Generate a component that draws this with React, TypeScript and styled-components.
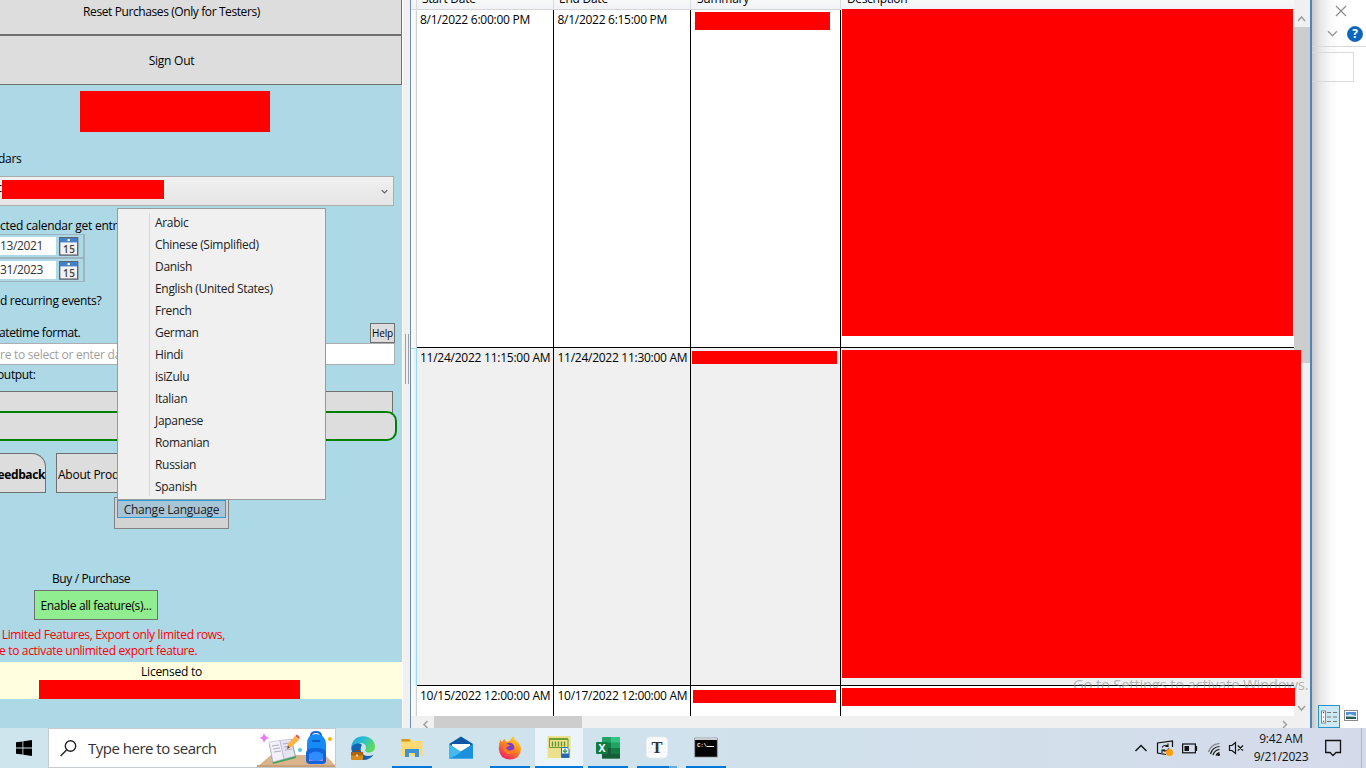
import React from 'react';
import styled, { createGlobalStyle } from 'styled-components';

const Global = createGlobalStyle`
  html, body { margin: 0; padding: 0; overflow: hidden; }
  body { font-family: "Open Sans", "Noto Sans", sans-serif; font-size: 12px; color: #000; }
  * { box-sizing: border-box; }
`;

const Screen = styled.div`
  width: 1366px;
  height: 768px;
  display: flex;
  flex-direction: column;
  overflow: hidden;
  background: #fff;
`;
const Desktop = styled.div`
  display: flex;
  height: 728px;
  position: relative;
  overflow: hidden;
`;

const Text = styled.span<{ $ls?: number }>`
  letter-spacing: ${p => p.$ls ?? -0.25}px;
  white-space: pre;
`;

/* ---------- left pane ---------- */
const Pane = styled.div`
  width: 402px;
  flex: none;
  background: #add8e6;
  display: flex;
  flex-direction: column;
  align-items: flex-start;
  position: relative;
`;
const WideButton = styled.div<{ $h: number; $up?: number }>`
  width: 402px;
  height: ${p => p.$h}px;
  margin-top: -${p => p.$up ?? 0}px;
  flex: none;
  background: #ddd;
  border: 1px solid #707070;
  border-left: 0;
  display: flex;
  align-items: center;
  justify-content: center;
  padding-right: 58px;
`;
const Redaction = styled.div<{ $w: number; $h: number; $m?: string }>`
  flex: none;
  width: ${p => p.$w}px;
  height: ${p => p.$h}px;
  margin: ${p => p.$m ?? '0'};
  background: #f00;
  position: relative;
  z-index: 2;
`;
const Label = styled.div<{ $top?: number; $h?: number; $x?: number }>`
  flex: none;
  height: ${p => p.$h ?? 18}px;
  line-height: ${p => (p.$h ?? 18) + 1}px;
  margin-top: ${p => p.$top ?? 0}px;
  margin-left: ${p => p.$x ?? 0}px;
  white-space: pre;
`;
const Combo = styled.div`
  flex: none;
  width: 394px;
  height: 30px;
  margin-top: 9px;
  border: 1px solid #acacac;
  border-left: 0;
  background: linear-gradient(#f0f0f0, #e5e5e5);
  display: flex;
  align-items: center;
  justify-content: space-between;
  padding-right: 5px;
`;
const ComboValue = styled.div`
  display: flex;
  height: 28px;
  line-height: 22px;
`;
const Clip = styled.div`
  width: 2px;
  overflow: hidden;
  display: flex;
  justify-content: flex-end;
`;
const Picker = styled.div`
  flex: none;
  width: 85px;
  height: 24px;
  border: 1px solid #9db4c0;
  border-right-width: 2px;
  border-left: 0;
  display: flex;
  align-items: center;
`;
const PickerField = styled.div`
  width: 56px;
  height: 18px;
  line-height: 17px;
  background: #fff;
  color: #333;
  margin-right: 3px;
`;
const FormatRow = styled.div`
  flex: none;
  width: 395px;
  height: 20px;
  margin-top: 14px;
  display: flex;
  justify-content: space-between;
`;
const HelpButton = styled.div`
  width: 25px;
  height: 20px;
  background: #ddd;
  border: 1px solid #707070;
  font-size: 10px;
  display: flex;
  align-items: center;
  justify-content: center;
`;
const FormatInput = styled.div`
  flex: none;
  width: 395px;
  height: 22px;
  line-height: 22px;
  border: 1px solid #abadb3;
  border-left: 0;
  background: #fff;
  color: #a0a0a0;
`;
const OutputButton = styled.div`
  flex: none;
  width: 393px;
  height: 22px;
  margin-top: 8px;
  background: #ddd;
  border: 1px solid #707070;
  border-left: 0;
`;
const GreenButton = styled.div`
  flex: none;
  width: 397px;
  height: 30px;
  margin-top: -2px;
  background: #ddd;
  border: 2px solid #008000;
  border-left: 0;
  border-radius: 0 10px 10px 0;
`;
const ButtonRow = styled.div`
  flex: none;
  display: flex;
  gap: 10px;
  margin-top: 12px;
  height: 40px;
`;
const FeedbackButton = styled.div`
  width: 46px;
  background: #ddd;
  border: 1px solid #707070;
  border-left: 0;
  border-radius: 0 14px 0 0;
  line-height: 41px;
  font-weight: 700;
  display: flex;
  justify-content: flex-end;
`;
const AboutButton = styled.div`
  width: 100px;
  background: #ddd;
  border: 1px solid #707070;
  line-height: 41px;
  padding-left: 1px;
`;
const LanguageBox = styled.div`
  flex: none;
  width: 115px;
  height: 32px;
  margin: 4px 0 0 114px;
  padding: 2px;
  background: #d3d3d3;
  border: 1px solid #838383;
`;
const LanguageItem = styled.div`
  width: 109px;
  height: 18px;
  background: #a7c5d6;
  border: 1px solid #26a0da;
  color: #212121;
  line-height: 17px;
  text-align: center;
`;
const EnableButton = styled.div`
  flex: none;
  width: 124px;
  height: 30px;
  margin: 3px 0 6px 34px;
  background: #90ee90;
  border: 1px solid #707070;
  line-height: 29px;
  text-align: center;
`;
const Warning = styled.div`
  flex: none;
  height: 16px;
  line-height: 17px;
  margin-left: -1px;
  color: #f00;
`;
const License = styled.div`
  flex: none;
  width: 402px;
  height: 37px;
  margin-top: 4px;
  background: #ffffe0;
`;
const LicenseTitle = styled.div`
  height: 18px;
  line-height: 19px;
  padding-right: 59px;
  text-align: center;
`;
const Menu = styled.div`
  position: absolute;
  z-index: 5;
  left: 117px;
  top: 208px;
  width: 209px;
  height: 292px;
  padding: 4px 2px 2px 31px;
  background: #f0f0f0;
  border: 1px solid #999;
`;
const MenuList = styled.div`
  border-left: 1px solid #d7d7d7;
  height: 283px;
`;
const MenuItem = styled.div`
  height: 22px;
  line-height: 19px;
  padding-left: 5px;
  color: #212121;
`;

/* ---------- table ---------- */
const Splitter = styled.div`
  width: 8px;
  flex: none;
  background: #f0f0f0;
  border-left: 1px solid #fff;
  display: flex;
  align-items: center;
  justify-content: center;
  gap: 2px;
`;
const Grip = styled.i`
  width: 1px;
  height: 50px;
  margin-top: -10px;
  background: #a0a0a0;
`;
const GridWindow = styled.div`
  width: 902px;
  flex: none;
  border-left: 1px solid #6a8cb0;
  border-right: 1px solid #6b7f94;
  box-shadow: inset -1px 0 #4b84bd;
  display: flex;
  position: relative;
  background: #f0f0f0;
`;
const TableArea = styled.div`
  width: 883px;
  display: flex;
  flex-direction: column;
`;
const Header = styled.div`
  height: 10px;
  flex: none;
  display: flex;
  padding-left: 5px;
  background: linear-gradient(#f7f8fa, #f1f2f5);
  border-bottom: 1px solid #d5d5d5;
`;
const HeaderCell = styled.div<{ $w: number }>`
  width: ${p => p.$w}px;
  height: 9px;
  line-height: 18px;
  padding-left: 5px;
  border-left: 1px solid #d9dbde;
  overflow: hidden;
`;
const HeaderText = styled.div<{ $x?: number }>`
  margin-top: -10px;
  margin-left: ${p => p.$x ?? 0}px;
`;
const Row = styled.div<{ $h: number; $alt?: boolean }>`
  height: ${p => p.$h}px;
  flex: none;
  display: flex;
  background: ${p => (p.$alt ? '#f0f0f0' : '#fff')};
`;
const RowHead = styled.div<{ $alt?: boolean }>`
  width: 6px;
  flex: none;
  background: ${p => (p.$alt ? 'linear-gradient(90deg,#fff,#d9f0fb)' : 'linear-gradient(90deg,#fff,#f2f3f5)')};
  border-right: 1px solid ${p => (p.$alt ? '#99d8f8' : '#d0d0d0')};
  border-top: 1px solid ${p => (p.$alt ? '#99d8f8' : 'transparent')};
`;
const Cell = styled.div<{ $w: number; $open?: boolean; $last?: boolean; $pad?: number }>`
  width: ${p => p.$w}px;
  flex: none;
  line-height: 20px;
  padding-left: ${p => p.$pad ?? 3}px;
  border-right: ${p => (p.$open ? 0 : 1)}px solid #000;
  border-bottom: ${p => (p.$last ? 0 : 1)}px solid #000;
`;
const SummaryCell = styled(Cell)`
  padding-left: 1px;
  display: flex;
`;
const Dot = styled.span`
  width: 3px;
  padding-left: 2px;
  line-height: 20px;
`;
const HScroll = styled.div`
  height: 12px;
  display: flex;
  background: #f0f0f0;
  justify-content: space-between;
  padding: 0 4px 0 10px;
`;
const HThumb = styled.div`
  width: 148px;
  height: 12px;
  margin-left: 5px;
  margin-right: auto;
  background: #cdcdcd;
`;
const VScroll = styled.div`
  width: 16px;
  flex: none;
  display: flex;
  flex-direction: column;
  align-items: center;
`;
const VThumb = styled.div`
  width: 16px;
  height: 336px;
  margin-bottom: auto;
  background: #cdcdcd;
`;
const Watermark = styled.div`
  position: absolute;
  left: 662px;
  top: 674px;
  z-index: 1;
  font-size: 15px;
  line-height: 20px;
  color: rgba(140, 140, 140, 0.62);
`;

/* ---------- window behind ---------- */
const Behind = styled.div`
  flex: 1;
  background: linear-gradient(90deg, #c9c9c9, #e6e6e6 8px, #f8f8f8 18px, #fff 26px);
  display: flex;
  flex-direction: column;
`;
const CloseRow = styled.div`
  height: 21px;
  padding: 4px 0 0 23px;
`;
const HelpRow = styled.div`
  height: 26px;
  padding: 0 3px 0 15px;
  border-bottom: 1px solid #d9d9d9;
  display: flex;
  align-items: center;
  justify-content: space-between;
`;
const AddressBox = styled.div`
  width: 42px;
  height: 30px;
  margin-top: 5px;
  border: 1px solid #d9d9d9;
  border-left: 0;
`;
const ViewModes = styled.div`
  margin-top: auto;
  padding-left: 6px;
  height: 23px;
  display: flex;
`;
const ViewMode = styled.div<{ $on?: boolean }>`
  width: 22px;
  height: 23px;
  display: flex;
  align-items: center;
  justify-content: center;
  padding-bottom: ${p => (p.$on ? 0 : 2)}px;
  background: ${p => (p.$on ? '#cce8f4' : 'transparent')};
  border: 1px solid ${p => (p.$on ? '#2892c9' : 'transparent')};
`;

/* ---------- taskbar ---------- */
const Taskbar = styled.div`
  height: 40px;
  display: flex;
  align-items: stretch;
  background: linear-gradient(90deg, #cfe5ee 0%, #cfe3ed 40%, #d2dfeb 75%, #d5daea 100%);
`;
const Start = styled.div`
  width: 48px;
  display: flex;
  align-items: center;
  justify-content: center;
`;
const Search = styled.div`
  width: 288px;
  margin-right: 3px;
  background: #fff;
  border: 1px solid #c6cbce;
  display: flex;
  align-items: center;
  padding-left: 11px;
  font-size: 15px;
  color: #333;
`;
const SearchText = styled.div`
  margin-left: 11px;
  width: 169px;
`;
const Apps = styled.div`
  display: flex;
  gap: 1px;
`;
const AppTile = styled.div<{ $active?: boolean }>`
  width: 48px;
  height: 40px;
  display: flex;
  flex-direction: column;
  align-items: center;
  justify-content: space-between;
  padding-top: 8px;
  background: ${p => (p.$active ? '#ebf4f8' : 'transparent')};
`;
const Underline = styled.div<{ $w: number; $split?: boolean }>`
  width: ${p => p.$w}px;
  height: 2px;
  background: ${p => (p.$split ? 'linear-gradient(90deg,#0078d7 32px,#63a9e3 32px)' : '#0078d7')};
`;
const Tray = styled.div`
  margin-left: auto;
  display: flex;
  align-items: center;
`;
const Clock = styled.div`
  width: 62px;
  margin-right: 13px;
  text-align: center;
  line-height: 18px;
  padding-bottom: 1px;
  color: #111;
`;
const ShowDesktop = styled.div`
  width: 5px;
  height: 40px;
  border-left: 1px solid #b0b7c4;
`;

const Chevron = ({ dir, size = 8, color = '#606060', w = 1.3 }: { dir: 'up' | 'down' | 'left' | 'right'; size?: number; color?: string; w?: number }) => {
  const d = { up: 'M1 7 5 3 9 7', down: 'M1 3 5 7 9 3', left: 'M7 1 3 5 7 9', right: 'M3 1 7 5 3 9' }[dir];
  return (
    <svg width={size} height={size} viewBox="0 0 10 10" fill="none" stroke={color} strokeWidth={w}>
      <path d={d} />
    </svg>
  );
};

const CalendarIcon = () => (
  <svg width="20" height="19" viewBox="0 0 20 19">
    <rect x=".7" y=".7" width="18" height="17.4" fill="#f2f2f2" stroke="#56606a" strokeWidth="1.3" />
    <rect x="1" y="1" width="17.4" height="4.4" fill="#4481c4" />
    <circle cx="9.7" cy="3" r="1.3" fill="#fff" />
    <text x="4" y="15.6" fontSize="10" fontWeight="600" fill="#444" fontFamily="Open Sans, sans-serif" textLength="12">15</text>
  </svg>
);

const languages = ['Arabic', 'Chinese (Simplified)', 'Danish', 'English (United States)', 'French', 'German', 'Hindi', 'isiZulu', 'Italian', 'Japanese', 'Romanian', 'Russian', 'Spanish'];

const LeftPane = () => (
  <Pane>
    <WideButton $h={47} $up={12 + 0}><Text $ls={-0.4}>Reset Purchases (Only for Testers)</Text></WideButton>
    <WideButton $h={50}><Text>Sign Out</Text></WideButton>
    <Redaction $w={190} $h={41} $m="6px 0 0 80px" />
    <Label $top={17} $x={-2}><Text $ls={-0.3}>dars</Text></Label>
    <Combo>
      <ComboValue>
        <Clip>c</Clip>
        <Redaction $w={162} $h={19} $m="3px 0 0" />
      </ComboValue>
      <Chevron dir="down" size={7} w={1.7} />
    </Combo>
    <Label $top={11} $h={17}><Text>cted calendar get entr</Text></Label>
    <Picker><PickerField><Text $ls={-0.35}>13/2021</Text></PickerField><CalendarIcon /></Picker>
    <Picker><PickerField><Text $ls={-0.35}>31/2023</Text></PickerField><CalendarIcon /></Picker>
    <Label $top={9}><Text $ls={-0.3}>d recurring events?</Text></Label>
    <FormatRow>
      <Label $x={-1}><Text $ls={-0.4}>atetime format.</Text></Label>
      <HelpButton><Text $ls={-0.2}>Help</Text></HelpButton>
    </FormatRow>
    <FormatInput><Text $ls={-0.25}>re to select or enter da</Text></FormatInput>
    <Label $x={-3}><Text $ls={-0.35}>output:</Text></Label>
    <OutputButton />
    <GreenButton />
    <ButtonRow>
      <FeedbackButton><Text $ls={-0.4}>eedback</Text></FeedbackButton>
      <AboutButton><Text>About Product</Text></AboutButton>
    </ButtonRow>
    <LanguageBox><LanguageItem><Text>Change Language</Text></LanguageItem></LanguageBox>
    <Label $top={40} $x={52}><Text $ls={-0.38}>Buy / Purchase</Text></Label>
    <EnableButton><Text $ls={-0.37}>Enable all feature(s)...</Text></EnableButton>
    <Warning><Text $ls={-0.35}> Limited Features, Export only limited rows,</Text></Warning>
    <Warning><Text $ls={-0.33}>e to activate unlimited export feature.</Text></Warning>
    <License>
      <LicenseTitle><Text>Licensed to</Text></LicenseTitle>
      <Redaction $w={261} $h={19} $m="0 0 0 39px" />
    </License>
    <Menu>
      <MenuList>
        {languages.map(l => <MenuItem key={l}><Text $ls={-0.31}>{l}</Text></MenuItem>)}
      </MenuList>
    </Menu>
  </Pane>
);

const DataGrid = () => (
  <GridWindow>
    <TableArea>
      <Header>
        <HeaderCell $w={137}><HeaderText><Text>Start Date</Text></HeaderText></HeaderCell>
        <HeaderCell $w={137}><HeaderText><Text>End Date</Text></HeaderText></HeaderCell>
        <HeaderCell $w={150}><HeaderText $x={1}><Text>Summary</Text></HeaderText></HeaderCell>
        <HeaderCell $w={452}><HeaderText $x={1}><Text $ls={-0.35}>Description</Text></HeaderText></HeaderCell>
      </Header>
      <Row $h={338}>
        <RowHead />
        <Cell $w={137}><Text>8/1/2022 6:00:00 PM</Text></Cell>
        <Cell $w={137} $pad={3.5}><Text $ls={-0.28}>8/1/2022 6:15:00 PM</Text></Cell>
        <SummaryCell $w={150}><Dot>.</Dot><Redaction $w={135} $h={18} $m="2px 0 0 0" /></SummaryCell>
        <Cell $w={453} $open $pad={1}><Redaction $w={451} $h={327} $m="-1px 0 0" /></Cell>
      </Row>
      <Row $h={338} $alt>
        <RowHead $alt />
        <Cell $w={137}><Text>11/24/2022 11:15:00 AM</Text></Cell>
        <Cell $w={137} $pad={3.5}><Text $ls={-0.27}>11/24/2022 11:30:00 AM</Text></Cell>
        <SummaryCell $w={150}><Redaction $w={145} $h={13} $m="3px 0 0" /></SummaryCell>
        <Cell $w={453} $open $pad={1}><Redaction $w={459} $h={328} $m="2px 0 0" /></Cell>
      </Row>
      <Row $h={30}>
        <RowHead />
        <Cell $w={137} $last><Text>10/15/2022 12:00:00 AM</Text></Cell>
        <Cell $w={137} $last $pad={3.5}><Text $ls={-0.27}>10/17/2022 12:00:00 AM</Text></Cell>
        <SummaryCell $w={150} $last><Redaction $w={143} $h={13} $m="4px 0 0 1px" /></SummaryCell>
        <Cell $w={453} $open $last $pad={1}><Redaction $w={453} $h={18} $m="2px 0 0" /></Cell>
      </Row>
      <HScroll>
        <svg width="8" height="12" viewBox="0 0 8 12" fill="none" stroke="#a0a0a0" strokeWidth="1.5"><path d="M6.5 5 3 8.5 6.5 12" /></svg>
        <HThumb />
        <svg width="8" height="12" viewBox="0 0 8 12" fill="none" stroke="#a0a0a0" strokeWidth="1.5"><path d="M1 5 4.5 8.5 1 12" /></svg>
      </HScroll>
    </TableArea>
    <VScroll>
      <svg width="16" height="27" viewBox="0 0 16 27" fill="none" stroke="#a0a0a0" strokeWidth="1.5"><path d="M4 21 7.5 17 11 21" /></svg>
      <VThumb />
      <svg width="16" height="28" viewBox="0 0 16 28" fill="none" stroke="#a0a0a0" strokeWidth="1.5"><path d="M4 6 7.5 10 11 6" /></svg>
    </VScroll>
    <Watermark><Text $ls={-0.3}>Go to Settings to activate Windows.</Text></Watermark>
  </GridWindow>
);

const BehindWindow = () => (
  <Behind>
    <CloseRow>
      <svg width="12" height="12" viewBox="0 0 12 12" stroke="#8a8a8a" strokeWidth="1.1"><path d="M1 1 11 11M11 1 1 11" /></svg>
    </CloseRow>
    <HelpRow>
      <Chevron dir="down" size={11} color="#999" />
      <svg width="16" height="16" viewBox="0 0 16 16">
        <circle cx="8" cy="8" r="7.6" fill="#0b66c3" stroke="#0a4f96" strokeWidth=".6" />
        <text x="8" y="12.3" fontSize="12" fontWeight="700" fill="#fff" textAnchor="middle" fontFamily="Open Sans, sans-serif">?</text>
      </svg>
    </HelpRow>
    <AddressBox />
    <ViewModes>
      <ViewMode $on>
        <svg width="16" height="14" viewBox="0 0 16 14">
          <rect x=".5" y="1" width="4" height="12" fill="#fff" stroke="#888" />
          <path d="M6 2.5h4M12 2.5h4M6 7h4M12 7h4M6 11.5h4M12 11.5h4" stroke="#777" />
          <rect x="2" y="2" width="1.2" height="1.2" fill="#555" />
          <rect x="2" y="6.4" width="1.2" height="1.2" fill="#3a8be0" />
          <rect x="2" y="10.6" width="1.2" height="1.2" fill="#c22" />
        </svg>
      </ViewMode>
      <ViewMode>
        <svg width="14" height="11" viewBox="0 0 14 11">
          <rect x=".5" y=".5" width="13" height="10" fill="#fff" stroke="#8a8a8a" />
          <rect x="2" y="2" width="10" height="7" fill="#4f93d6" />
          <path d="M2 5.5 6 4 12 6V7H2z" fill="#cfe6f4" />
          <path d="M2 6.5 12 7V9H2z" fill="#2e5a58" />
        </svg>
      </ViewMode>
    </ViewModes>
  </Behind>
);

const SearchArt = () => (
  <svg width="78" height="38" viewBox="0 0 78 38">
    <path d="M0 38 14 26H68L78 36V38z" fill="#d9b48c" />
    <path d="M0 36H78V38H0z" fill="#c79f78" />
    <path d="M7 4Q8 8 12 9Q8 10 7 14Q6 10 3 8.5Q6 8 7 4z" fill="#e879f2" />
    <path d="M12 15 35 10 39 29 16 35z" fill="#3fa35a" />
    <path d="M12 13 23 11.5 27 30 16 33z" fill="#f2f0fa" stroke="#b9b4cf" strokeWidth=".6" />
    <path d="M23 11.5 34 10 38 27 27 30z" fill="#e6e3f2" stroke="#b9b4cf" strokeWidth=".6" />
    <path d="M15 17l7-1M16 20l7-1M17 23l7-1M26 15l7-1M27 18l7-1M28 21l7-1" stroke="#a9a5bd" strokeWidth=".9" />
    <path d="M30 20 31 15 38 7 42 11 34 18z" fill="#ffb340" />
    <path d="M38 7 40 5.5Q43 7 42.5 10.5z" fill="#ef5350" />
    <path d="M30 20 31 16.5 33 18.5z" fill="#6b4a35" />
    <circle cx="43" cy="21" r="2" fill="#4fcbe0" />
    <circle cx="73" cy="10" r="2" fill="#ffb400" />
    <path d="M54 7Q54 3 59 3T64 7" fill="none" stroke="#1564d6" strokeWidth="2" />
    <path d="M50 15Q50 5 59 5T69 15V31Q69 35 65 35H54Q50 35 50 31z" fill="#168bf5" />
    <path d="M49 24Q49 19 59 19T69 24V31Q69 35 65 35H53Q49 35 49 31z" fill="#1264dc" />
    <path d="M52 25Q59 20 66 25V30Q59 34 52 30z" fill="#2f8cff" />
    <path d="M52 30Q59 34 66 30V32H52z" fill="#b68cff" />
    <path d="M55 12H63" stroke="#0a4db8" strokeWidth="1.5" />
  </svg>
);

const EdgeIcon = () => (
  <svg width="24" height="24" viewBox="0 0 24 24">
    <defs>
      <linearGradient id="eg" x1="0" y1="0" x2="1" y2=".5"><stop offset="0" stopColor="#1f9fe0" /><stop offset=".5" stopColor="#2bc0d0" /><stop offset="1" stopColor="#5fd95a" /></linearGradient>
    </defs>
    <path d="M.3 11C2 6 9 6 11 9 8 13 10 20 17 20 20 20 22 19 23 18 20.500 22 17 24 12 24 5 24 0 18 .3 11z" fill="#1263b4" />
    <path d="M.3 11C1 4 6 .2 12 .2 19 .2 24 5 24 10.500c0 4-3 6-6 6-3.500 0-4.500-1.500-3.500-3C16 10.500 14 7 9.500 7 5 7 1.500 9 .3 11z" fill="url(#eg)" />
    <rect x="0" y="16" width="12" height="8" rx="1" fill="#d98a1c" />
    <rect x="0" y="16" width="12" height="3.5" fill="#b0610f" />
    <path d="M4 16V14.5H8V16" fill="none" stroke="#8a4a0a" />
    <rect x="5" y="18.5" width="2" height="2" fill="#ffe08a" />
  </svg>
);
const ExplorerIcon = () => (
  <svg width="24" height="24" viewBox="0 0 24 24">
    <path d="M1.5 3H10L12 5H22V20H1.5z" fill="#ffcf5c" />
    <path d="M1.5 3H9.5L10.5 5.5H1.5z" fill="#d99a10" />
    <path d="M1.5 6H10L12 5H22.5V20H1.5z" fill="#ffd972" />
    <path d="M5 13H19V21H15V17H9V21H5z" fill="#3b93d6" />
  </svg>
);
const MailIcon = () => (
  <svg width="24" height="24" viewBox="0 0 24 24">
    <path d="M0 8 12 .5 24 8V12H0z" fill="#0d57a6" />
    <path d="M3 8H21V15H3z" fill="#fff" />
    <path d="M0 8 12 16 24 8V22.5H0z" fill="#2ba6e8" />
    <path d="M0 22.5 24 8V22.5z" fill="#1b90dc" />
    <path d="M0 8 12 16 6 20 0 22.5z" fill="#42baf0" />
  </svg>
);
const FirefoxIcon = () => (
  <svg width="24" height="24" viewBox="0 0 24 24">
    <defs><linearGradient id="fx" x1=".8" y1="0" x2=".2" y2="1"><stop offset="0" stopColor="#ffe22e" /><stop offset=".45" stopColor="#ff8a1e" /><stop offset="1" stopColor="#f5156c" /></linearGradient></defs>
    <path d="M2 4Q3 5 4 6Q5 3.5 7 3Q7 5 9 6Q12 5 13 3Q14 1 15.5 0Q16 3 18 4.5Q22.800 8 23 13Q22.500 23 12 23.500Q1.500 23 .8 13Q.8 8 2 4z" fill="url(#fx)" />
    <circle cx="11.5" cy="11.5" r="4.8" fill="#7b3fd0" />
    <path d="M5 9Q9 7 12 9.500Q10 11 8 11.500Q9 15 13 14.500Q15.500 14 17 12Q17 18 12 18.500Q5 17.500 5 9z" fill="#ff7b22" />
  </svg>
);
const SheetAppIcon = () => (
  <svg width="24" height="24" viewBox="0 0 24 24">
    <rect x=".5" y="0" width="23" height="22" fill="#ece08c" />
    <path d="M2 2H21V4H2z" fill="#6f9e2f" />
    <path d="M2.5 3V11.500H21V3" fill="none" stroke="#6f9e2f" />
    <path d="M5.500 5.500V10.500M8.500 5.500V10.500M11.500 5.500V10.500M14.500 5.500V10.500M17.500 5.500V10.500" stroke="#5d922c" strokeWidth="1.3" />
    <path d="M14.500 11.500H20L22 13.500V21.500H14.500z" fill="#eaf3ff" stroke="#2f6fb8" />
    <path d="M18 12.5V16M16 14.500 18 16.500 20 14.500" fill="none" stroke="#3f9a3f" strokeWidth="1.2" />
    <rect x="15" y="17.5" width="7" height="3.5" fill="#2668b0" />
  </svg>
);
const ExcelIcon = () => (
  <svg width="24" height="24" viewBox="0 0 24 24">
    <rect x="6" y="1" width="18" height="21.5" rx="1" fill="#21a366" />
    <path d="M15 1H24V6.5H15z" fill="#33c481" />
    <path d="M6 6.5H15V12H6z" fill="#107c41" />
    <path d="M15 12H24V17.5H15z" fill="#107c41" />
    <path d="M6 12H15V22.5H6z" fill="#185c37" />
    <path d="M15 17.5H24V22.5H15z" fill="#185c37" />
    <rect x="0" y="6" width="12" height="12" rx="1" fill="#107c41" />
    <text x="6" y="16" fontSize="10.5" fontWeight="700" fill="#fff" textAnchor="middle" fontFamily="Open Sans, sans-serif">X</text>
  </svg>
);
const TyporaIcon = () => (
  <svg width="24" height="24" viewBox="0 0 24 24">
    <rect x="1.5" y="1" width="21" height="21" rx="4" fill="#fcfcfc" stroke="#ececec" strokeWidth=".6" />
    <path d="M3 8H21M3 12H21M3 16H21" stroke="#ececec" />
    <text x="12" y="17" fontSize="16.5" fontWeight="700" fill="#333" textAnchor="middle" fontFamily="Liberation Serif, serif">T</text>
  </svg>
);
const ConsoleIcon = () => (
  <svg width="24" height="24" viewBox="0 0 24 24">
    <rect x=".8" y="2" width="22.4" height="19" fill="#050505" stroke="#888" strokeWidth=".7" />
    <rect x="1" y="2" width="22" height="2" fill="#c9ccd0" />
    <text x="3" y="10.8" fontSize="6" fontWeight="700" fill="#eee" fontFamily="Liberation Mono, monospace" textLength="10">C:\</text>
    <path d="M13 10.5H20" stroke="#eee" />
  </svg>
);

const apps = [
  { icon: <EdgeIcon />, line: 0 },
  { icon: <ExplorerIcon />, line: 40 },
  { icon: <MailIcon />, line: 0 },
  { icon: <FirefoxIcon />, line: 40 },
  { icon: <SheetAppIcon />, line: 48, active: true },
  { icon: <ExcelIcon />, line: 40 },
  { icon: <TyporaIcon />, line: 40, split: true },
  { icon: <ConsoleIcon />, line: 40 },
];

const TrayIcons = () => (
  <svg width="120" height="24" viewBox="1130 736 120 24" fill="none" stroke="#111" strokeWidth="1.2">
    <path d="M1135.5 751 1141 745.5 1146.5 751" strokeWidth="1.4" />
    <path d="M1166 754.5 1157.5 753V743L1172.5 741V747" />
    <path d="M1162 747.5Q1164 744 1168 746M1168 743.5V746.5H1165.5M1169 748.5Q1167 752 1163 750.5M1162 753V750H1165" strokeWidth="1.1" />
    <circle cx="1169.5" cy="752.5" r="3.6" fill="#ff9d0a" stroke="none" />
    <rect x="1182.6" y="744" width="12.8" height="8.8" />
    <rect x="1184.5" y="746" width="4.5" height="5" fill="#111" stroke="none" />
    <path d="M1196.5 746V751" />
    <path d="M1208.5 752Q1211 744 1219.5 743.5" stroke="#777" />
    <path d="M1210.5 754Q1212.5 747 1219.5 746.5M1213 755Q1214.5 750 1219.5 749.5M1216 755.5Q1217 753 1219.5 752.5" />
    <circle cx="1218.5" cy="754.5" r="1.5" fill="#111" stroke="none" />
    <path d="M1229.5 745.5H1232L1235.5 742.5V753.5L1232 750.5H1229.5zM1237.8 745.5 1243 750.7M1243 745.5 1237.8 750.7" />
  </svg>
);

export default function App() {
  return (
    <Screen>
      <Global />
      <Desktop>
        <LeftPane />
        <Splitter><Grip /><Grip /></Splitter>
        <DataGrid />
        <BehindWindow />
      </Desktop>
      <Taskbar>
        <Start>
          <svg width="16" height="16" viewBox="0 0 16 16" fill="#000"><path d="M0 2.3 6.5 1.4V7.6H0zM7.3 1.3 16 0V7.6H7.3zM0 8.4H6.5V14.6L0 13.7zM7.3 8.4H16V16L7.3 14.7z" /></svg>
        </Start>
        <Search>
          <svg width="17" height="17" viewBox="0 0 17 17" fill="none" stroke="#222" strokeWidth="1.4"><circle cx="10.5" cy="6" r="5.2" /><path d="M6.8 9.8 .6 16" /></svg>
          <SearchText><Text $ls={-0.5}>Type here to search</Text></SearchText>
          <SearchArt />
        </Search>
        <Apps>
          {apps.map((a, i) => (
            <AppTile key={i} $active={a.active}>
              {a.icon}
              <Underline $w={a.line} $split={a.split} />
            </AppTile>
          ))}
        </Apps>
        <Tray>
          <TrayIcons />
          <Clock><Text>9:42 AM</Text><br /><Text>9/21/2023</Text></Clock>
          <svg width="36" height="24" viewBox="1325 736 36 24" fill="none" stroke="#111" strokeWidth="1.3"><path d="M1325.7 740.5H1340.5V752.5H1336L1333 755.5 1330 752.5H1325.7z" /></svg>
          <ShowDesktop />
        </Tray>
      </Taskbar>
    </Screen>
  );
}
